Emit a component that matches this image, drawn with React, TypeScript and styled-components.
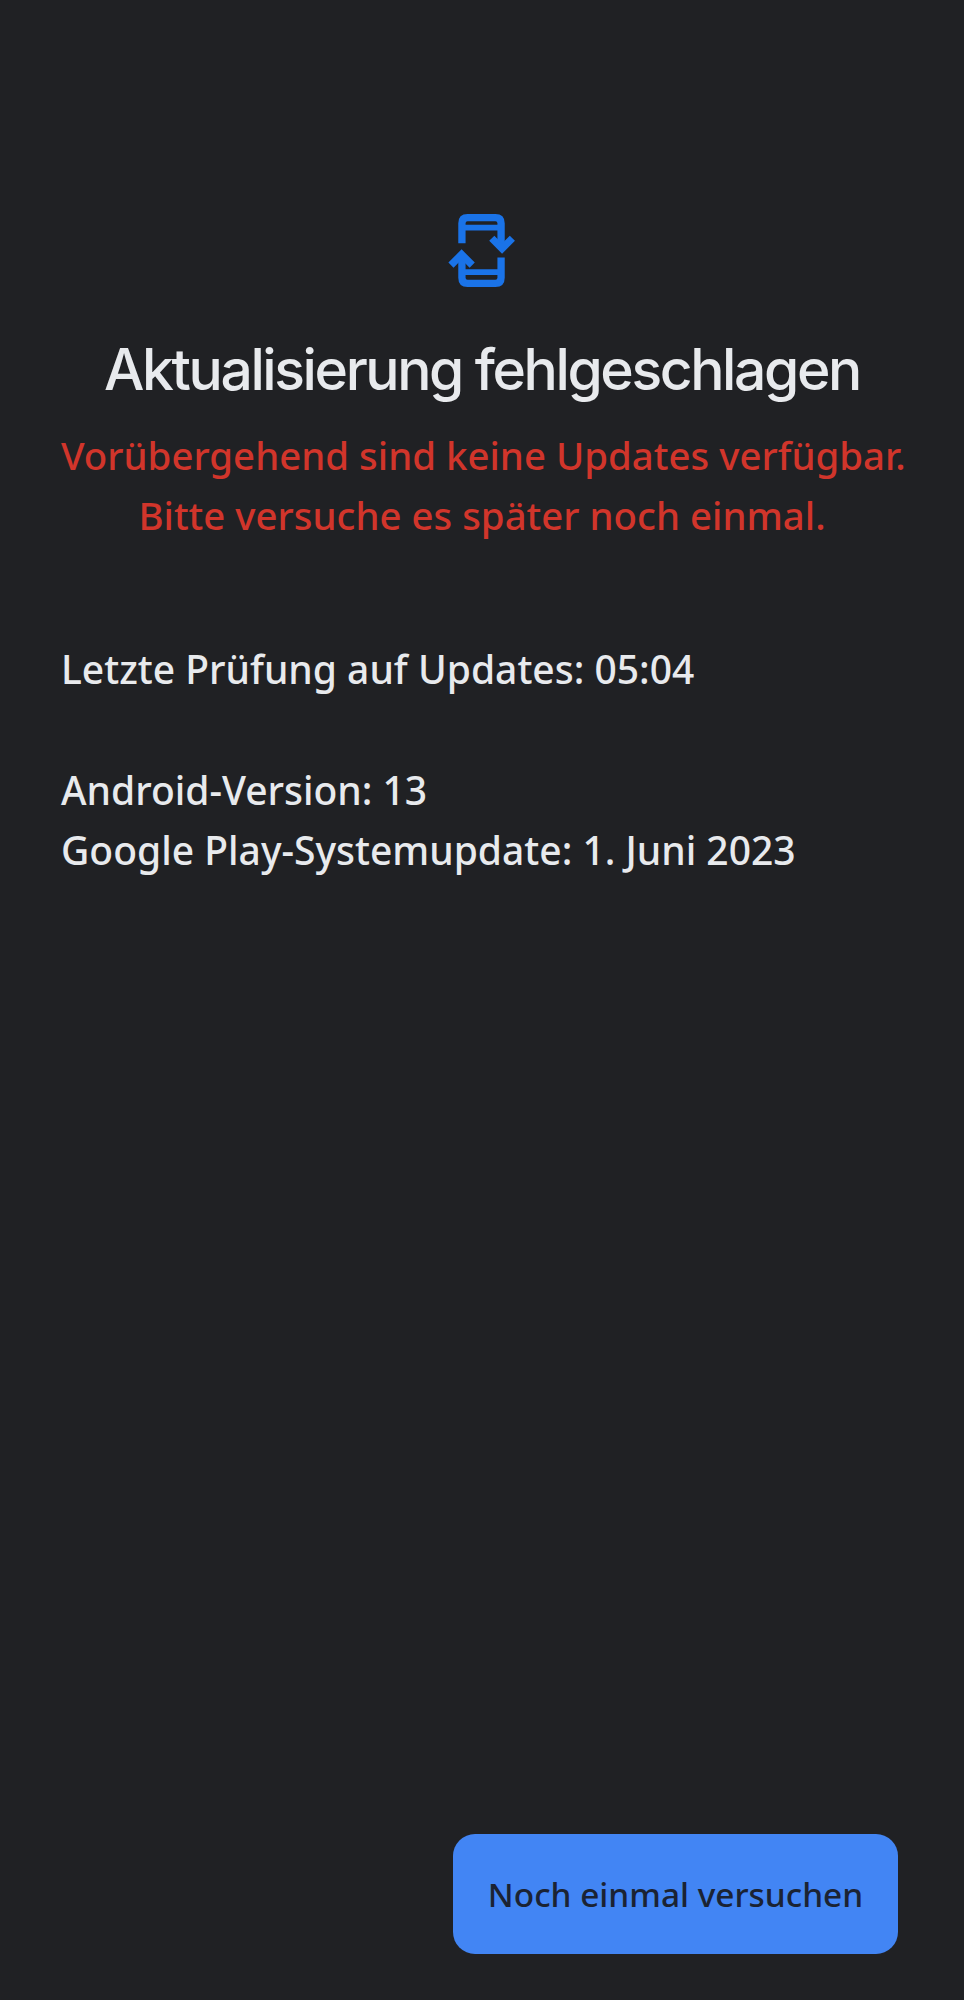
import React from 'react';
import styled, { createGlobalStyle } from 'styled-components';

const GlobalStyle = createGlobalStyle`
    html, body {
        margin: 0;
        padding: 0;
        background: #202124;
    }
`

const UpdateIcon = () => (
    <StIcon viewBox="85 72 200 220" fill="none" stroke="#1a73e8" strokeWidth="22">
        <path d="M126 160V100Q126 83 143 83H227Q244 83 244 100V170" />
        <path d="M126 113H244" strokeWidth="17" />
        <path d="M216 145L247 176L278 145" />
        <path d="M126 195V264Q126 281 143 281H227Q244 281 244 264V203" />
        <path d="M126 247H244" strokeWidth="17" />
        <path d="M93 226L125 194L157 226" />
    </StIcon>
)

const App = () => {
    return (
        <StPage>
            <GlobalStyle />
            <StContent>
                <UpdateIcon />
                <StTitle>Aktualisierung fehlgeschlagen</StTitle>
                <StError>
                    Vorübergehend sind keine Updates verfügbar.
                    <br />
                    Bitte versuche es später noch einmal.
                </StError>
                <StInfo>
                    <StLine>Letzte Prüfung auf Updates: 05:04</StLine>
                </StInfo>
                <StInfo>
                    <StLine>Android-Version: 13</StLine>
                    <StLine>Google Play-Systemupdate: 1. Juni 2023</StLine>
                </StInfo>
            </StContent>
            <StFooter>
                <StButton>Noch einmal versuchen</StButton>
            </StFooter>
        </StPage>
    );
};

const StPage = styled.div`
    display: flex;
    flex-direction: column;
    justify-content: space-between;
    box-sizing: border-box;
    width: 964px;
    height: 2000px;
    padding: 214px 66px 46px 61px;
    background: #202124;
    font-family: "Noto Sans", sans-serif;
`

const StContent = styled.div`
    display: flex;
    flex-direction: column;
`

const StIcon = styled.svg`
    display: block;
    width: 67px;
    height: 73px;
    align-self: center;
    margin-left: 4px;
`

const StTitle = styled.h1`
    margin: 47px -5px 0 0;
    font-family: Inter, sans-serif;
    font-size: 57px;
    line-height: 72px;
    font-weight: 500;
    letter-spacing: -2.4px;
    text-align: center;
    color: #e8eaed;
`

const StError = styled.p`
    margin: 0 -5px 0 0;
    padding-top: 19px;
    font-size: 38.4px;
    font-weight: 500;
    line-height: 60px;
    text-align: center;
    white-space: nowrap;
    color: #d1352b;
`

const StInfo = styled.div`
    margin-top: 61px;
    &:first-of-type {
        margin-top: 94px;
    }
`

const StLine = styled.div`
    font-size: 39px;
    font-weight: 500;
    line-height: 60px;
    color: #e8eaed;
`

const StFooter = styled.div`
    display: flex;
    justify-content: flex-end;
`

const StButton = styled.button`
    width: 445px;
    height: 120px;
    padding: 0;
    border: none;
    border-radius: 22px;
    background: #4285f4;
    font-family: "Noto Sans", sans-serif;
    font-size: 33.4px;
    font-weight: 500;
    color: #1b2333;
`

export default App;
